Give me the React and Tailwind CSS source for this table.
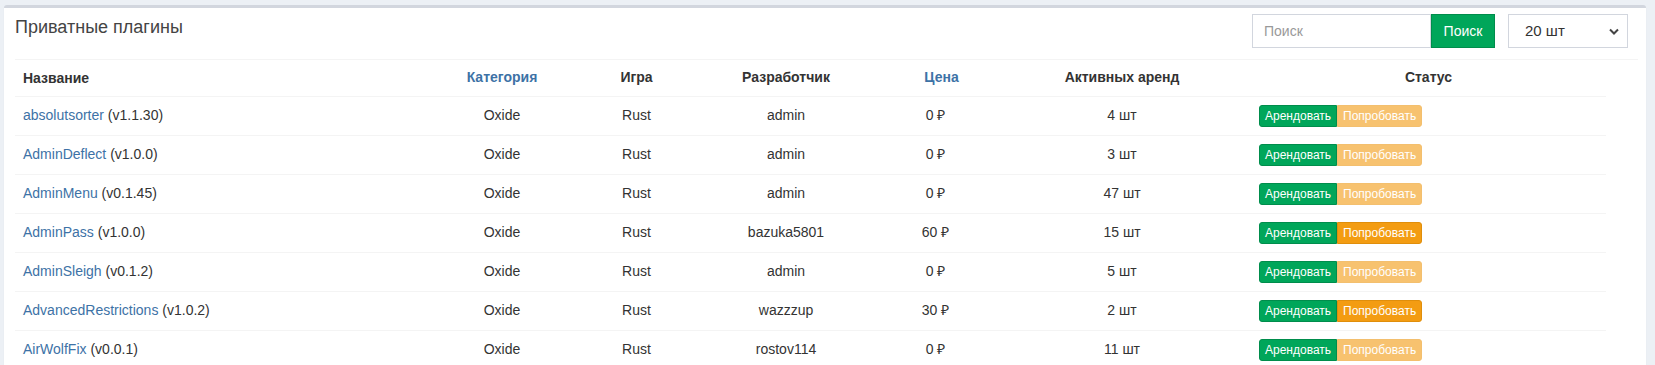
import React from "react";

const rows = [
  { name: "absolutsorter", ver: "v1.1.30", dev: "admin", price: "0 ₽", active: "4 шт", paid: false },
  { name: "AdminDeflect", ver: "v1.0.0", dev: "admin", price: "0 ₽", active: "3 шт", paid: false },
  { name: "AdminMenu", ver: "v0.1.45", dev: "admin", price: "0 ₽", active: "47 шт", paid: false },
  { name: "AdminPass", ver: "v1.0.0", dev: "bazuka5801", price: "60 ₽", active: "15 шт", paid: true },
  { name: "AdminSleigh", ver: "v0.1.2", dev: "admin", price: "0 ₽", active: "5 шт", paid: false },
  { name: "AdvancedRestrictions", ver: "v1.0.2", dev: "wazzzup", price: "30 ₽", active: "2 шт", paid: true },
  { name: "AirWolfFix", ver: "v0.0.1", dev: "rostov114", price: "0 ₽", active: "11 шт", paid: false },
];

export default function App() {
  return (
    <div
      className="bg-[#ecf0f5] min-h-[365px] pt-[5px] pl-[4px] pr-[9px] text-[14px] text-[#333]"
      style={{ fontFamily: '"Liberation Sans", Arial, sans-serif' }}
    >
      <div className="bg-white border-t-[3px] border-[#d2d6de] rounded-[3px] shadow-[0_1px_1px_rgba(0,0,0,0.1)] min-h-[360px]">
        <div className="pl-[11px] pr-[8px]">
          <div className="h-[52px] flex items-start justify-between border-b border-[#f4f4f4]">
            <h3 className="mt-[9px] text-[18px] leading-[20px] text-[#444]">Приватные плагины</h3>
            <div className="flex mt-[6px] mr-[10px]">
              <div className="flex">
                <div className="w-[179px] h-[34px] border border-[#d2d6de] flex items-center pl-[11px] text-[#999] text-[14px]">
                  Поиск
                </div>
                <div className="w-[64px] h-[34px] bg-[#00a65a] border border-[#008d4c] text-white flex items-center justify-center text-[14px]">
                  Поиск
                </div>
              </div>
              <div className="ml-[13px] w-[120px] h-[34px] border border-[#d2d6de] flex items-center justify-between pl-[16px] pr-[8px] text-[#333] text-[15px]">
                <span>20 шт</span>
                <svg width="10" height="7" viewBox="0 0 10 7">
                  <path d="M1 1.5 L5 5.5 L9 1.5" fill="none" stroke="#444" strokeWidth="2" />
                </svg>
              </div>
            </div>
          </div>
          <table className="w-[1591px] table-fixed border-collapse">
            <colgroup>
              <col className="w-[398px]" />
              <col className="w-[178px]" />
              <col className="w-[91px]" />
              <col className="w-[208px]" />
              <col className="w-[103px]" />
              <col className="w-[258px]" />
              <col className="w-[355px]" />
            </colgroup>
            <thead>
              <tr className="h-[36px] font-bold">
                <th className="text-left px-[8px] leading-[20px]">Название</th>
                <th className="text-center px-[8px] text-[#3d72a6]">Категория</th>
                <th className="text-center px-[8px]">Игра</th>
                <th className="text-center px-[8px]">Разработчик</th>
                <th className="text-center px-[8px] text-[#3d72a6]">Цена</th>
                <th className="text-center px-[8px]">Активных аренд</th>
                <th className="text-center px-[8px]">Статус</th>
              </tr>
            </thead>
            <tbody>
              {rows.map((r) => (
                <tr key={r.name} className="h-[39px] border-t border-[#f4f4f4]">
                  <td className="px-[8px]">
                    <span className="text-[#3d72a6]">{r.name}</span> ({r.ver})
                  </td>
                  <td className="text-center px-[8px]">Oxide</td>
                  <td className="text-center px-[8px]">Rust</td>
                  <td className="text-center px-[8px]">{r.dev}</td>
                  <td className="text-center pl-[8px] pr-[20px]">{r.price}</td>
                  <td className="text-center px-[8px]">{r.active}</td>
                  <td className="px-[8px]">
                    <div className="flex text-[12px] leading-[18px]">
                      <span className="h-[22px] px-[5px] pt-[1px] bg-[#00a65a] border border-[#008d4c] text-white rounded-l-[3px]">
                        Арендовать
                      </span>
                      <span
                        className={
                          r.paid
                            ? "h-[22px] px-[5px] pt-[1px] bg-[#f39c12] border border-[#e08e0b] text-white rounded-r-[3px]"
                            : "h-[22px] px-[5px] pt-[1px] bg-[#f7c26f] border border-[#f3bf6e] text-white rounded-r-[3px]"
                        }
                      >
                        Попробовать
                      </span>
                    </div>
                  </td>
                </tr>
              ))}
            </tbody>
          </table>
        </div>
      </div>
    </div>
  );
}
